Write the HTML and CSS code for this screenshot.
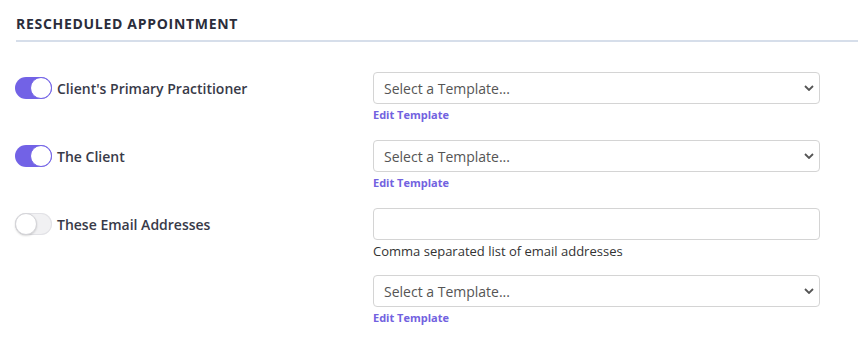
FILE: index.html
```html
<!DOCTYPE html>
<html>

<head>
  <title>Notifications: Rescheduled Appointment</title>
  <link rel="stylesheet" href="styles.css">
</head>

<body>
  <section class="notify-section">
    <h3 class="section-title">Rescheduled Appointment</h3>

    <div class="notify-row">
      <label class="notify-label">
        <span class="switch on"><span class="knob"></span></span>
        Client's Primary Practitioner
      </label>
      <div class="notify-field">
        <select class="form-select">
          <option>Select a Template...</option>
        </select>
        <a class="edit-link" href="#">Edit Template</a>
      </div>
    </div>

    <div class="notify-row">
      <label class="notify-label">
        <span class="switch on"><span class="knob"></span></span>
        The Client
      </label>
      <div class="notify-field">
        <select class="form-select">
          <option>Select a Template...</option>
        </select>
        <a class="edit-link" href="#">Edit Template</a>
      </div>
    </div>

    <div class="notify-row">
      <label class="notify-label">
        <span class="switch"><span class="knob"></span></span>
        These Email Addresses
      </label>
      <div class="notify-field">
        <input type="text" class="form-input">
        <div class="help-text">Comma separated list of email addresses</div>
        <select class="form-select spaced">
          <option>Select a Template...</option>
        </select>
        <a class="edit-link" href="#">Edit Template</a>
      </div>
    </div>
  </section>
</body>

</html>
```

FILE: styles.css
```css
body {
  font-family: "Open Sans", Arial, sans-serif;
  margin: 0;
  background-color: #fff;
  color: #333;
}

.notify-section {
  padding: 14px 0 0 16px;
}

.section-title {
  margin: 0;
  padding-bottom: 6px;
  font-size: 14px;
  line-height: 20px;
  font-weight: 700;
  letter-spacing: 0.7px;
  text-transform: uppercase;
  color: #2b2d3b;
  border-bottom: 2px solid #d6deea;
}

.notify-row {
  display: grid;
  grid-template-columns: 357px 447px;
  margin-top: 30px;
}

.notify-row + .notify-row {
  margin-top: 18px;
}

.notify-label {
  display: flex;
  align-items: center;
  gap: 5px;
  height: 32px;
  margin-left: -1px;
  font-size: 14px;
  font-weight: 600;
  color: #383a48;
}

.switch {
  position: relative;
  display: inline-block;
  width: 37px;
  height: 22px;
  border-radius: 11px;
  background: #f1f1f3;
  box-shadow: inset 0 0 0 1px #e2e2e6;
}

.switch .knob {
  position: absolute;
  top: 0;
  left: 0;
  width: 22px;
  height: 22px;
  box-sizing: border-box;
  border-radius: 50%;
  background: #fff;
  border: 1px solid #d4d4d8;
  box-shadow: 0 1px 2px rgba(0, 0, 0, 0.15);
}

.switch.on {
  background: #7262e6;
  box-shadow: none;
}

.switch.on .knob {
  left: auto;
  right: 0;
  border: 1.5px solid #7262e6;
  box-shadow: none;
}

.notify-field {
  display: flex;
  flex-direction: column;
  align-items: flex-start;
}

.form-select,
.form-input {
  width: 447px;
  height: 32px;
  box-sizing: border-box;
  font-family: inherit;
  font-size: 14px;
  color: #555;
  background-color: #fff;
  border: 1px solid #d4d4d4;
  border-radius: 4px;
}

.form-select {
  padding: 0 30px 0 10px;
  appearance: none;
  background-image: url("data:image/svg+xml,%3Csvg xmlns='http://www.w3.org/2000/svg' width='10' height='6' viewBox='0 0 10 6'%3E%3Cpath d='M1 1l4 4 4-4' fill='none' stroke='%23555' stroke-width='1.8'/%3E%3C/svg%3E");
  background-repeat: no-repeat;
  background-position: right 5px center;
}

.form-select.spaced {
  margin-top: 15px;
}

.form-input {
  padding: 0 10px;
}

.edit-link {
  margin-top: 4px;
  font-size: 11px;
  line-height: 14px;
  font-weight: 700;
  color: #7262e0;
  text-decoration: none;
}

.help-text {
  margin-top: 2px;
  font-size: 13px;
  line-height: 18px;
  color: #333;
}
```
